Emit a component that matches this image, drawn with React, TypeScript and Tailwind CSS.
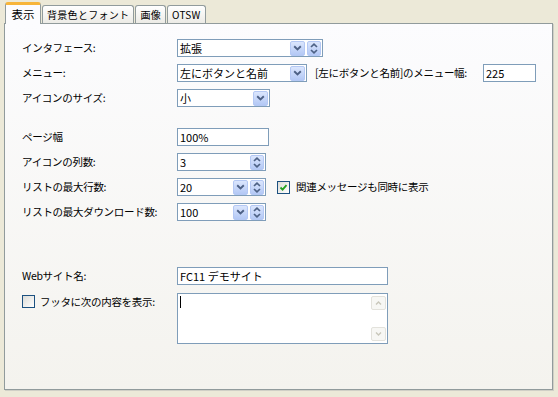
const font = "font-['Noto_Sans_CJK_JP','Noto_Sans',sans-serif]";

function DropBtn() {
  return (
    <span className="w-[15px] h-[15px] rounded-[2px] border border-[#b4c8f4] bg-gradient-to-b from-[#dbe6fd] to-[#b3c8f5] flex items-center justify-center">
      <svg width="9" height="6" viewBox="0 0 9 6">
        <path d="M1.2 1.2 L4.5 4.4 L7.8 1.2" fill="none" stroke="#4d6185" strokeWidth="1.9" />
      </svg>
    </span>
  );
}

function SpinBtn() {
  return (
    <span className="w-[14px] h-[15px] rounded-[2px] border border-[#b4c8f4] bg-gradient-to-b from-[#dbe6fd] to-[#b3c8f5] flex flex-col items-center justify-center gap-[1px]">
      <svg width="8" height="5" viewBox="0 0 8 5">
        <path d="M1 4 L4 1.2 L7 4" fill="none" stroke="#4d6185" strokeWidth="1.7" />
      </svg>
      <svg width="8" height="5" viewBox="0 0 8 5">
        <path d="M1 1 L4 3.8 L7 1" fill="none" stroke="#4d6185" strokeWidth="1.7" />
      </svg>
    </span>
  );
}

function Field({ value, w, drop, spin }: { value: string; w: string; drop?: boolean; spin?: boolean }) {
  return (
    <div className={`${w} h-[18px] border border-[#7f9db9] bg-white flex items-center pl-[2px] pr-[1px]`}>
      <span className="flex-1 text-[11px] leading-none text-black">{value}</span>
      <div className="flex items-center gap-[2px]">
        {drop && <DropBtn />}
        {spin && <SpinBtn />}
      </div>
    </div>
  );
}

function Check({ checked }: { checked?: boolean }) {
  return (
    <span className="w-[13px] h-[13px] shrink-0 border border-[#1c5180] bg-gradient-to-br from-[#dcdcd7] to-white flex items-center justify-center">
      {checked && (
        <svg width="9" height="9" viewBox="0 0 9 9">
          <path d="M1.5 4.5 L3.6 6.6 L7.5 2.2" fill="none" stroke="#21a121" strokeWidth="1.8" />
        </svg>
      )}
    </span>
  );
}

function Row({ label, children, className = '' }: { label: string; children: React.ReactNode; className?: string }) {
  return (
    <div className={`flex items-center h-[18px] ${className}`}>
      <span className="w-[155px] text-[10.5px] tracking-[-0.3px] text-black">{label}</span>
      {children}
    </div>
  );
}

const tabs = ['表示', '背景色とフォント', '画像', 'OTSW'];

export default function App() {
  return (
    <div className={`w-[558px] h-[397px] bg-[#ece9d8] pt-[2px] px-[4px] ${font}`}>
      <div className="flex items-end h-[21px] relative z-10 pl-[1px]">
        {tabs.map((t, i) =>
          i === 0 ? (
            <div
              key={t}
              className="h-[22px] w-[36px] justify-center bg-[#fcfcfe] border border-b-0 border-[#919b9c] border-t-[3px] border-t-[#f7b53a] rounded-t-[3px] text-[11.5px] flex items-center -mb-[1px]"
            >
              {t}
            </div>
          ) : (
            <div
              key={t}
              className="h-[18px] px-[4px] ml-[1px] bg-gradient-to-b from-white to-[#ecebe6] border border-b-0 border-[#919b9c] rounded-t-[3px] text-[10px] flex items-center tracking-[0.3px]"
            >
              {t}
            </div>
          )
        )}
      </div>
      <div className="h-[367px] w-[549px] border border-[#919b9c] bg-gradient-to-b from-[#fcfcfe] to-[#f4f3ee] shadow-[1px_1px_0_#d0cfc6] pl-[17px] pt-[15px]">
        <Row label="インタフェース:">
          <Field value="拡張" w="w-[146px]" drop spin />
        </Row>
        <Row label="メニュー:" className="mt-[7px]">
          <Field value="左にボタンと名前" w="w-[130px]" drop />
          <span className="text-[10.5px] tracking-[-0.3px] ml-[8px] w-[168px]">[左にボタンと名前]のメニュー幅:</span>
          <Field value="225" w="w-[53px]" />
        </Row>
        <Row label="アイコンのサイズ:" className="mt-[7px]">
          <Field value="小" w="w-[93px]" drop />
        </Row>
        <Row label="ページ幅" className="mt-[21px]">
          <Field value="100%" w="w-[92px]" />
        </Row>
        <Row label="アイコンの列数:" className="mt-[7px]">
          <Field value="3" w="w-[89px]" spin />
        </Row>
        <Row label="リストの最大行数:" className="mt-[7px]">
          <Field value="20" w="w-[89px]" drop spin />
          <span className="ml-[11px]">
            <Check checked />
          </span>
          <span className="text-[10.5px] tracking-[-0.3px] ml-[6px]">関連メッセージも同時に表示</span>
        </Row>
        <Row label="リストの最大ダウンロード数:" className="mt-[7px]">
          <Field value="100" w="w-[89px]" drop spin />
        </Row>
        <Row label="Webサイト名:" className="mt-[46px]">
          <div className="w-[211px] h-[18px] border border-[#7f9db9] bg-white flex items-center pl-[2px] text-[11px]">
            FC11 デモサイト
          </div>
        </Row>
        <div className="flex mt-[8px]">
          <div className="w-[155px] flex items-start pt-[2px]">
            <Check />
            <span className="text-[10.5px] tracking-[-0.3px] ml-[5px] leading-[13px]">フッタに次の内容を表示:</span>
          </div>
          <div className="w-[211px] h-[51px] border border-[#7f9db9] bg-white flex">
            <div className="flex-1 pl-[2px] pt-[2px]">
              <span className="block w-[1px] h-[12px] bg-black" />
            </div>
            <div className="w-[15px] flex flex-col justify-between py-[2px] mr-[1px]">
              <span className="h-[14px] border border-[#e3e2dc] rounded-[2px] bg-[#f7f7f4] flex items-center justify-center">
                <svg width="7" height="4" viewBox="0 0 7 4">
                  <path d="M1 3.4 L3.5 1 L6 3.4" fill="none" stroke="#c9c7ba" strokeWidth="1.4" />
                </svg>
              </span>
              <span className="h-[14px] border border-[#e3e2dc] rounded-[2px] bg-[#f7f7f4] flex items-center justify-center">
                <svg width="7" height="4" viewBox="0 0 7 4">
                  <path d="M1 0.6 L3.5 3 L6 0.6" fill="none" stroke="#c9c7ba" strokeWidth="1.4" />
                </svg>
              </span>
            </div>
          </div>
        </div>
      </div>
    </div>
  );
}
